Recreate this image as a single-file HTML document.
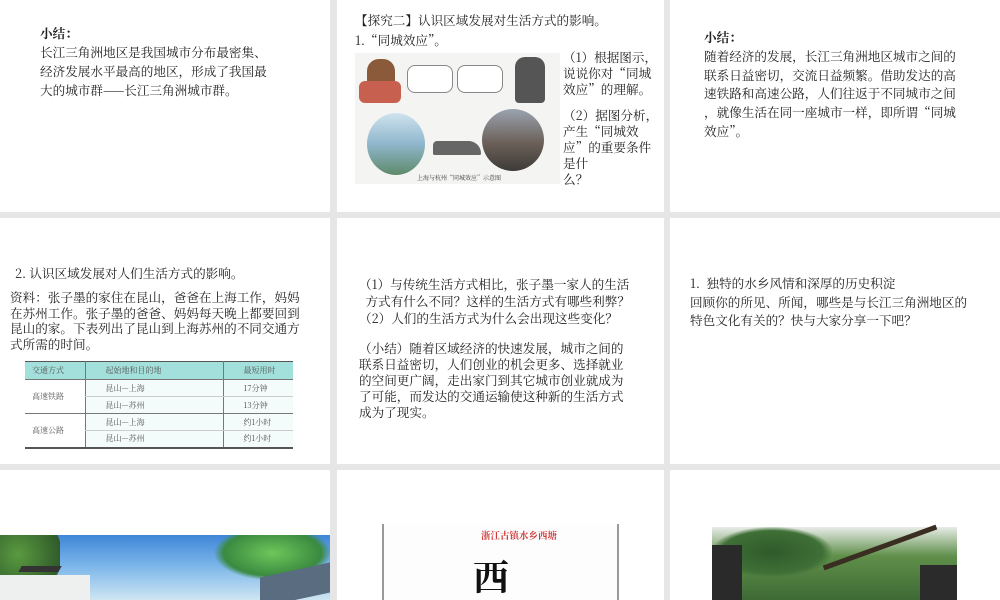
<!DOCTYPE html>
<html><head><meta charset="utf-8"><style>
*{margin:0;padding:0;box-sizing:border-box}
body{width:1000px;height:600px;overflow:hidden;background:#e6e6e6;position:relative;font-family:"Noto Serif CJK SC","Liberation Serif",serif;color:#222;font-size:12.6px}
.p{position:absolute;background:#fff;overflow:hidden}
.t{position:absolute;line-height:19px;white-space:nowrap}
b{font-weight:bold}
table{border-collapse:collapse;font-size:8px;color:#555}
</style></head><body>
<div class="p" style="left:0;top:0;width:330px;height:212px">
 <div class="t" style="left:40px;top:23px"><b>小结：</b><br>长江三角洲地区是我国城市分布最密集、<br>经济发展水平最高的地区，形成了我国最<br>大的城市群——长江三角洲城市群。</div>
</div>
<div class="p" style="left:337px;top:0;width:327px;height:212px">
 <div class="t" style="left:18px;top:10px;line-height:20px">【探究二】认识区域发展对生活方式的影响。<br>1.“同城效应”。</div>
 <div style="position:absolute;left:18px;top:53px;width:205px;height:131px;background:#f4f4f2">
  <div style="position:absolute;left:12px;top:6px;width:28px;height:40px;background:#8a5a3a;border-radius:12px 12px 4px 4px"></div>
  <div style="position:absolute;left:4px;top:28px;width:42px;height:22px;background:#c86050;border-radius:6px"></div>
  <div style="position:absolute;left:52px;top:12px;width:46px;height:28px;border:1px solid #888;border-radius:8px;background:#fff"></div>
  <div style="position:absolute;left:102px;top:12px;width:46px;height:28px;border:1px solid #888;border-radius:8px;background:#fff"></div>
  <div style="position:absolute;left:160px;top:4px;width:30px;height:46px;background:#555;border-radius:10px 10px 4px 4px"></div>
  <div style="position:absolute;left:12px;top:60px;width:58px;height:62px;border-radius:50%;background:linear-gradient(#cfe3ee,#8fb6cc 50%,#5e8a6a)"></div>
  <div style="position:absolute;left:127px;top:56px;width:62px;height:62px;border-radius:50%;background:linear-gradient(#9aa3b0,#6b6058 55%,#3d3a38)"></div>
  <div style="position:absolute;left:78px;top:88px;width:48px;height:14px;border-radius:10px 30px 4px 4px;background:#666"></div>
  <div style="position:absolute;left:62px;top:120px;font-size:6px;color:#333;white-space:nowrap">上海与杭州“同城效应”示意图</div>
 </div>
 <div class="t" style="left:226px;top:49px;line-height:16px">（1）根据图示，<br>说说你对“同城<br>效应”的理解。<div style="height:10px"></div>（2）据图分析，<br>产生“同城效<br>应”的重要条件<br>是什<br>么？</div>
</div>
<div class="p" style="left:670px;top:0;width:330px;height:212px">
 <div class="t" style="left:34px;top:28px;line-height:18.8px"><b>小结：</b><br>随着经济的发展，长江三角洲地区城市之间的<br>联系日益密切，交流日益频繁。借助发达的高<br>速铁路和高速公路，人们往返于不同城市之间<br>，就像生活在同一座城市一样，即所谓“同城<br>效应”。</div>
</div>
<div class="p" style="left:0;top:218px;width:330px;height:246px">
 <div class="t" style="left:15px;top:45px">2. 认识区域发展对人们生活方式的影响。</div>
 <div class="t" style="left:10px;top:71px;line-height:15.5px">资料：张子墨的家住在昆山，爸爸在上海工作，妈妈<br>在苏州工作。张子墨的爸爸、妈妈每天晚上都要回到<br>昆山的家。下表列出了昆山到上海苏州的不同交通方<br>式所需的时间。</div>
 <table style="position:absolute;left:25px;top:143px;width:268px">
  <tr style="background:#a3e0dc;height:18px;border-top:1px solid #555;border-bottom:1px solid #777"><td style="width:60px;padding-left:7px">交通方式</td><td style="width:138px;padding-left:20px;border-left:1px solid #777">起始地和目的地</td><td style="padding-left:20px;border-left:1px solid #777">最短用时</td></tr>
  <tr style="height:17px;background:#f4fcfb"><td rowspan="2" style="padding-left:7px;background:#fff;border-bottom:1px solid #777">高速铁路</td><td style="padding-left:20px;border-left:1px solid #777;border-bottom:1px solid #ccc">昆山—上海</td><td style="padding-left:20px;border-left:1px solid #777;border-bottom:1px solid #ccc">17分钟</td></tr>
  <tr style="height:17px;background:#f4fcfb;border-bottom:1px solid #777"><td style="padding-left:20px;border-left:1px solid #777">昆山—苏州</td><td style="padding-left:20px;border-left:1px solid #777">13分钟</td></tr>
  <tr style="height:17px;background:#f4fcfb"><td rowspan="2" style="padding-left:7px;background:#fff;border-bottom:2px solid #555">高速公路</td><td style="padding-left:20px;border-left:1px solid #777;border-bottom:1px solid #ccc">昆山—上海</td><td style="padding-left:20px;border-left:1px solid #777;border-bottom:1px solid #ccc">约1小时</td></tr>
  <tr style="height:17px;background:#f4fcfb;border-bottom:2px solid #555"><td style="padding-left:20px;border-left:1px solid #777">昆山—苏州</td><td style="padding-left:20px;border-left:1px solid #777">约1小时</td></tr>
 </table>
</div>
<div class="p" style="left:337px;top:218px;width:327px;height:246px">
 <div class="t" style="left:22px;top:57px;line-height:17px">（1）与传统生活方式相比，张子墨一家人的生活<br>&nbsp;&nbsp;方式有什么不同？这样的生活方式有哪些利弊？<br>（2）人们的生活方式为什么会出现这些变化？</div>
 <div class="t" style="left:22px;top:122px;line-height:16px">（小结）随着区域经济的快速发展，城市之间的<br>联系日益密切，人们创业的机会更多、选择就业<br>的空间更广阔，走出家门到其它城市创业就成为<br>了可能，而发达的交通运输使这种新的生活方式<br>成为了现实。</div>
</div>
<div class="p" style="left:670px;top:218px;width:330px;height:246px">
 <div class="t" style="left:20px;top:56px;line-height:18.5px">1.&nbsp;&nbsp;独特的水乡风情和深厚的历史积淀<br>回顾你的所见、所闻，哪些是与长江三角洲地区的<br>特色文化有关的？快与大家分享一下吧？</div>
</div>
<div class="p" style="left:0;top:470px;width:330px;height:130px">
 <div style="position:absolute;left:0;top:65px;width:330px;height:65px;background:linear-gradient(180deg,#3f86d8,#7fb8ea 50%,#cfe6f2)"></div>
 <div style="position:absolute;left:0;top:65px;width:60px;height:65px;background:radial-gradient(circle at 30% 30%,#5a9a40,#2f5a2a 70%,transparent 72%)"></div>
 <div style="position:absolute;left:0;top:105px;width:90px;height:25px;background:#eef0f0"></div>
 <div style="position:absolute;left:20px;top:96px;width:40px;height:6px;background:#333;transform:skewX(-30deg)"></div>
 <div style="position:absolute;left:215px;top:65px;width:115px;height:45px;background:radial-gradient(ellipse at 50% 40%,#6ec65a,#3a8a40 60%,transparent 72%)"></div>
 <div style="position:absolute;left:260px;top:100px;width:70px;height:30px;background:#5a6c80;transform:skewY(-12deg)"></div>
</div>
<div class="p" style="left:337px;top:470px;width:327px;height:130px">
 <div style="position:absolute;left:45px;top:54px;width:237px;height:76px;background:#fdfdfd;border-left:2px solid #999;border-right:2px solid #999"></div>
 <div class="t" style="left:144px;top:56px;font-size:9.5px;color:#d03838;font-weight:bold">浙江古镇水乡西塘</div>
 <div class="t" style="left:136px;top:86px;font-size:36px;line-height:40px;font-weight:bold;color:#111">西</div>
</div>
<div class="p" style="left:670px;top:470px;width:330px;height:130px">
 <div style="position:absolute;left:42px;top:57px;width:245px;height:73px;background:linear-gradient(180deg,#e8ece8 0%,#5f8f4a 40%,#3e6a35 100%)"></div>
 <div style="position:absolute;left:42px;top:57px;width:120px;height:50px;background:radial-gradient(ellipse,#2f5a2a,#3f7036 60%,transparent 72%)"></div>
 <div style="position:absolute;left:42px;top:75px;width:30px;height:55px;background:#2a2a2a"></div>
 <div style="position:absolute;left:250px;top:95px;width:37px;height:35px;background:#2b2b2b"></div>
 <div style="position:absolute;left:150px;top:75px;width:120px;height:5px;background:#3a2e22;transform:rotate(-20deg)"></div>
</div>
</body></html>
